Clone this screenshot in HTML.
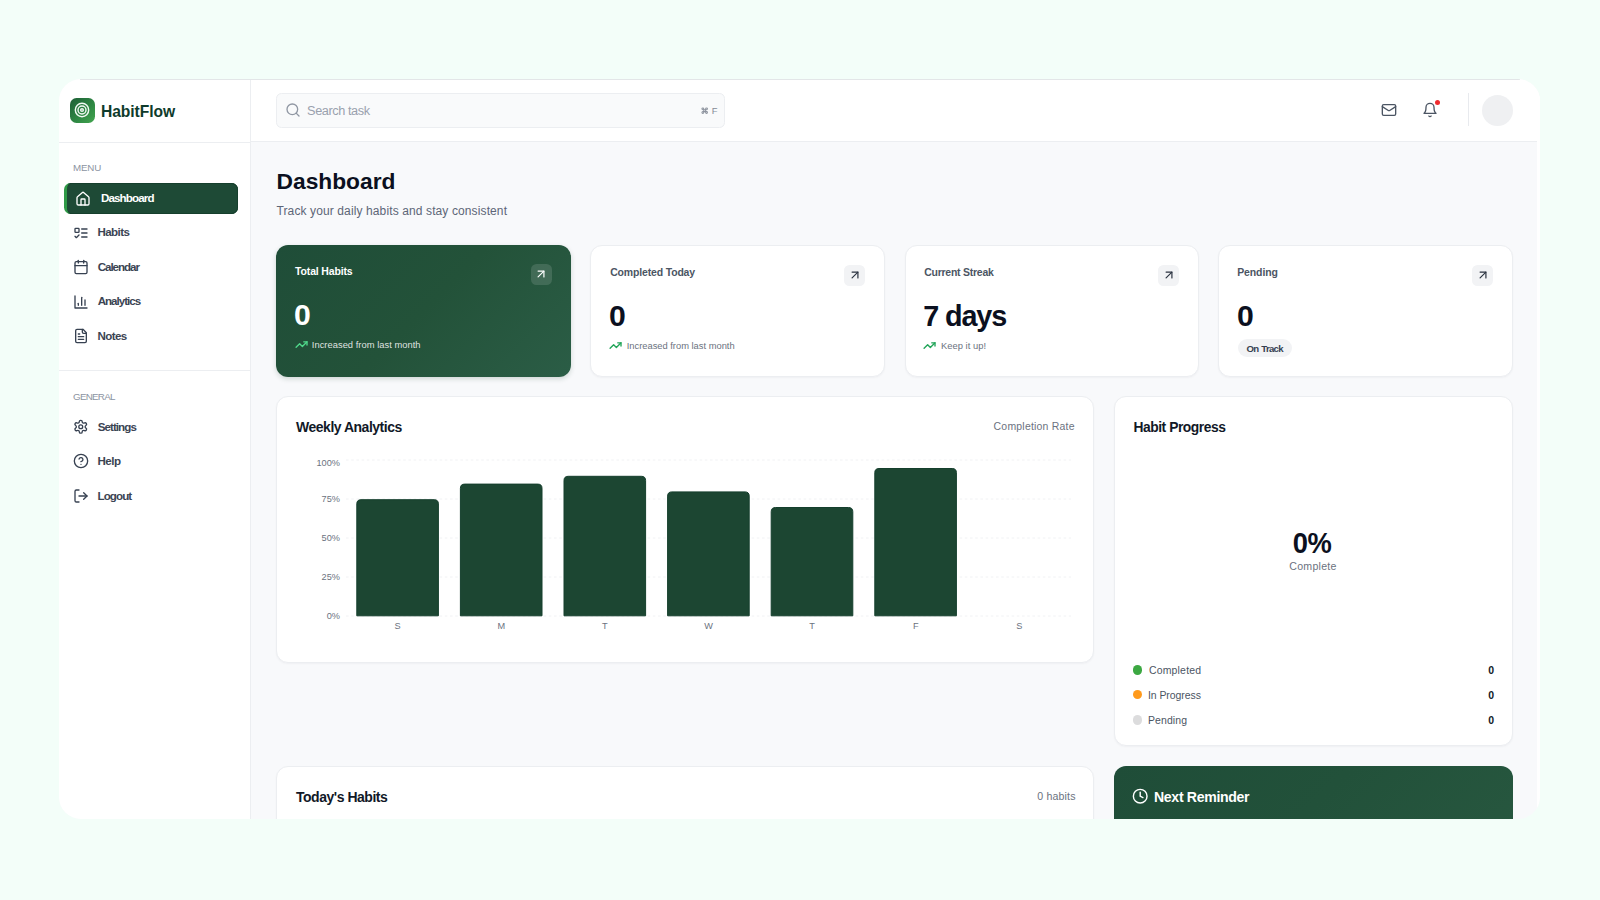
<!DOCTYPE html>
<html lang="en">
<head>
<meta charset="utf-8">
<title>HabitFlow Dashboard</title>
<style>
*{box-sizing:border-box;margin:0;padding:0}
html,body{width:1600px;height:900px;overflow:hidden}
body{background:#f3fef9;font-family:"Liberation Sans",sans-serif;position:relative;color:#111827}
.abs{position:absolute}
.t{position:absolute;white-space:nowrap;line-height:1;}
svg{display:block;overflow:visible}
.ic{position:absolute;fill:none;stroke:#374151;stroke-width:2;stroke-linecap:round;stroke-linejoin:round}
#win{position:absolute;left:59.3px;top:79px;width:1480.7px;height:740px;border-radius:22px;background:#f8f9fb;overflow:hidden}
#win:after{content:"";position:absolute;right:0;top:0;width:2.5px;height:740px;background:#fff}
#win:before{content:"";position:absolute;left:20.7px;right:20px;top:0;height:1px;background:#e3e6e8;z-index:5}
#side{position:absolute;left:0;top:0;width:191.7px;height:740px;background:#fff;border-right:1px solid #eceef1}
#head{position:absolute;left:191.7px;top:0;width:1289px;height:62.5px;background:#fff;border-bottom:1px solid #eceef1}
.hl{position:absolute;left:0;width:190.7px;height:1px;background:#eceef1}
.nav{font-size:11.6px;font-weight:700;color:#3b4453}
.lab{font-size:9.8px;color:#8c94a2;letter-spacing:.5px}
.ct{font-size:11.7px;font-weight:700;color:#4b5563}
.big{font-size:29px;font-weight:700;color:#0b1020}
.sm{font-size:10.4px;color:#6b7280}
.ab{width:21px;height:21px;border-radius:5.5px;background:#f2f3f5}
.ar{stroke:#2b3340;stroke-width:2.05}
.tr{stroke:#22a559;stroke-width:2.5}
.st{font-size:15px;font-weight:700;color:#111827}
.yl{font-size:9.2px;color:#6b7280}
.xl{font-size:9.2px;color:#6b7280}
.lg{font-size:11.6px;color:#4b5563}
.lv{font-size:10.5px;font-weight:700;color:#111827}
.card{position:absolute;background:#fff;border:1px solid #eceef1;border-radius:12px;box-shadow:0 1px 2px rgba(16,24,40,.04)}
</style>
</head>
<body>
<div id="win">
  <!-- SIDEBAR -->
  <div id="side">
    <div class="hl" style="top:62.5px"></div>
    <div class="hl" style="top:290.6px"></div>
  </div>
  <!-- HEADER -->
  <div id="head"></div>
</div>

<!-- logo -->
<div class="abs" style="left:69.5px;top:97.5px;width:25px;height:25px;border-radius:6.5px;background:linear-gradient(135deg,#1d5e36 0%,#2f8a44 60%,#44a650 100%)"></div>
<svg class="ic" style="left:74px;top:102px;stroke:#f1f9f3;stroke-width:2.15" width="16" height="16" viewBox="0 0 24 24"><circle cx="12" cy="12" r="10"/><circle cx="12" cy="12" r="6"/><circle cx="12" cy="12" r="2"/></svg>
<div class="t" id="t_logo" style="left:101.00px;top:103.76px;font-size:15.64px;font-weight:700;color:#0e3b2c;letter-spacing:-0.075px">HabitFlow</div>

<!-- MENU -->
<div class="t lab" id="t_menu" style="left:73.10px;top:163.22px;font-size:9.78px;letter-spacing:-0.202px">MENU</div>
<div class="abs" style="left:64px;top:183px;width:174px;height:31px;border-radius:6.5px;background:#1e4a36;border-left:3px solid #2f9a47;box-shadow:inset -1px 0 0 #163f2d,inset 0 1px 0 #163f2d,inset 0 -1px 0 #163f2d"></div>
<svg class="ic" style="left:75.3px;top:190.9px;stroke:#fff" width="16" height="16" viewBox="0 0 24 24"><path d="M15 21v-8a1 1 0 0 0-1-1h-4a1 1 0 0 0-1 1v8"/><path d="M3 10a2 2 0 0 1 .709-1.528l7-5.999a2 2 0 0 1 2.582 0l7 5.999A2 2 0 0 1 21 10v9a2 2 0 0 1-2 2H5a2 2 0 0 1-2-2z"/></svg>
<div class="t nav" id="t_n0" style="left:101.00px;top:193.19px;color:#fff;font-size:11.59px;letter-spacing:-0.875px">Dashboard</div>

<svg class="ic" style="left:72.7px;top:225px" width="16" height="16" viewBox="0 0 24 24"><rect x="3" y="5" width="6" height="6" rx="1"/><path d="m3 17 2 2 4-4"/><path d="M13 6h8"/><path d="M13 12h8"/><path d="M13 18h8"/></svg>
<div class="t nav" id="t_n1" style="left:97.50px;top:227.49px;font-size:11.59px;letter-spacing:-0.600px">Habits</div>

<svg class="ic" style="left:72.7px;top:259.3px" width="16" height="16" viewBox="0 0 24 24"><path d="M8 2v4"/><path d="M16 2v4"/><rect width="18" height="18" x="3" y="4" rx="2"/><path d="M3 10h18"/></svg>
<div class="t nav" id="t_n2" style="left:97.70px;top:261.89px;font-size:11.59px;letter-spacing:-1.035px">Calendar</div>

<svg class="ic" style="left:72.7px;top:293.7px" width="16" height="16" viewBox="0 0 24 24"><path d="M3 3v18h18"/><path d="M18 17V9"/><path d="M13 17V5"/><path d="M8 17v-3"/></svg>
<div class="t nav" id="t_n3" style="left:97.70px;top:296.29px;font-size:11.59px;letter-spacing:-1.000px">Analytics</div>

<svg class="ic" style="left:72.7px;top:328px" width="16" height="16" viewBox="0 0 24 24"><path d="M15 2H6a2 2 0 0 0-2 2v16a2 2 0 0 0 2 2h12a2 2 0 0 0 2-2V7Z"/><path d="M14 2v4a2 2 0 0 0 2 2h4"/><path d="M10 9H8"/><path d="M16 13H8"/><path d="M16 17H8"/></svg>
<div class="t nav" id="t_n4" style="left:97.50px;top:330.69px;font-size:11.59px;letter-spacing:-0.625px">Notes</div>

<!-- GENERAL -->
<div class="t lab" id="t_gen" style="left:73.10px;top:392.22px;font-size:9.78px;letter-spacing:-0.737px">GENERAL</div>

<svg class="ic" style="left:73.1px;top:419.3px;stroke-width:2.05" width="15.5" height="15.5" viewBox="0 0 24 24"><path d="M12.22 2h-.44a2 2 0 0 0-2 2v.18a2 2 0 0 1-1 1.73l-.43.25a2 2 0 0 1-2 0l-.15-.08a2 2 0 0 0-2.73.73l-.22.38a2 2 0 0 0 .73 2.73l.15.1a2 2 0 0 1 1 1.72v.51a2 2 0 0 1-1 1.74l-.15.09a2 2 0 0 0-.73 2.73l.22.38a2 2 0 0 0 2.73.73l.15-.08a2 2 0 0 1 2 0l.43.25a2 2 0 0 1 1 1.73V20a2 2 0 0 0 2 2h.44a2 2 0 0 0 2-2v-.18a2 2 0 0 1 1-1.73l.43-.25a2 2 0 0 1 2 0l.15.08a2 2 0 0 0 2.73-.73l.22-.39a2 2 0 0 0-.73-2.73l-.15-.08a2 2 0 0 1-1-1.74v-.5a2 2 0 0 1 1-1.74l.15-.09a2 2 0 0 0 .73-2.73l-.22-.38a2 2 0 0 0-2.73-.73l-.15.08a2 2 0 0 1-2 0l-.43-.25a2 2 0 0 1-1-1.73V4a2 2 0 0 0-2-2z"/><circle cx="12" cy="12" r="3"/></svg>
<div class="t nav" id="t_n5" style="left:97.70px;top:422.09px;font-size:11.59px;letter-spacing:-0.933px">Settings</div>

<svg class="ic" style="left:72.5px;top:453.2px" width="16" height="16" viewBox="0 0 24 24"><circle cx="12" cy="12" r="10"/><path d="M9.09 9a3 3 0 0 1 5.83 1c0 2-3 3-3 3"/><path d="M12 17h.01"/></svg>
<div class="t nav" id="t_n6" style="left:97.50px;top:456.49px;font-size:11.59px;letter-spacing:-0.505px">Help</div>

<svg class="ic" style="left:72.7px;top:487.8px" width="16" height="16" viewBox="0 0 24 24"><path d="M9 21H5a2 2 0 0 1-2-2V5a2 2 0 0 1 2-2h4"/><polyline points="16 17 21 12 16 7"/><line x1="21" x2="9" y1="12" y2="12"/></svg>
<div class="t nav" id="t_n7" style="left:97.50px;top:490.89px;font-size:11.59px;letter-spacing:-0.900px">Logout</div>

<!-- HEADER CONTENT -->
<div class="abs" style="left:275.6px;top:92.6px;width:449.6px;height:35.2px;border:1px solid #eceef1;border-radius:5.5px;background:#f9fafb"></div>
<svg class="ic" style="left:284.9px;top:102.4px;stroke:#9097a3;stroke-width:2" width="16" height="16" viewBox="0 0 24 24"><circle cx="11" cy="11" r="8"/><path d="m21 21-4.3-4.3"/></svg>
<div class="t" id="t_search" style="left:307.10px;top:104.84px;font-size:12.71px;color:#9aa1ae;letter-spacing:-0.410px">Search task</div>
<svg class="ic" style="left:701px;top:106.6px;stroke:#8d939e;stroke-width:3.3" width="7.4" height="7.4" viewBox="0 0 24 24"><path d="M15 6v12a3 3 0 1 0 3-3H6a3 3 0 1 0 3 3V6a3 3 0 1 0-3 3h12a3 3 0 1 0-3-3"/></svg>
<div class="t" id="t_kf" style="left:711.8px;top:106px;font-size:9.4px;color:#858b97">F</div>

<svg class="ic" style="left:1381px;top:102.1px;stroke:#4b5563" width="16" height="16" viewBox="0 0 24 24"><rect width="20" height="16" x="2" y="4" rx="2"/><path d="m22 7-8.97 5.7a1.94 1.94 0 0 1-2.06 0L2 7"/></svg>
<svg class="ic" style="left:1421.7px;top:102.3px;stroke:#4b5563" width="16" height="16" viewBox="0 0 24 24"><path d="M6 8a6 6 0 0 1 12 0c0 7 3 9 3 9H3s3-2 3-9"/><path d="M10.3 21a1.94 1.94 0 0 0 3.4 0"/></svg>
<div class="abs" style="left:1434.6px;top:99.6px;width:5.6px;height:5.6px;border-radius:50%;background:#ef2b2d"></div>
<div class="abs" style="left:1468px;top:93px;width:1px;height:33px;background:#e8eaee"></div>
<div class="abs" style="left:1482px;top:94.5px;width:31px;height:31px;border-radius:50%;background:#eff0f2"></div>

<!-- MAIN -->
<div class="t" id="t_h1" style="left:276.60px;top:169.63px;font-size:22.77px;font-weight:700;color:#0b1020;letter-spacing:-0.011px">Dashboard</div>
<div class="t" id="t_sub" style="left:276.5px;top:205.23px;font-size:12.01px;color:#5d6677;letter-spacing:0.115px">Track your daily habits and stay consistent</div>

<!-- STAT CARD 1 -->
<div class="abs" style="left:276px;top:244.5px;width:295px;height:132.5px;border-radius:12px;background:linear-gradient(135deg,#1f4d38 0%,#235239 50%,#2b5d46 100%);box-shadow:0 2px 5px rgba(20,60,40,.18)"></div>
<div class="t ct" id="t_c1" style="left:295.10px;top:267.13px;color:#fff;font-weight:700;font-size:10.47px;letter-spacing:-0.153px">Total Habits</div>
<div class="abs ab" style="left:530.6px;top:263.6px;background:rgba(255,255,255,.13)"></div>
<svg class="ic ar" style="left:534.1px;top:267.1px;stroke:#fff" width="14" height="14" viewBox="0 0 24 24"><path d="M7 7h10v10"/><path d="M7 17 17 7"/></svg>
<div class="t big" id="t_v1" style="left:293.80px;top:300.85px;color:#fff;font-size:28.77px;letter-spacing:0.000px;transform:scaleX(1.05);transform-origin:0 50%">0</div>
<svg class="ic tr" style="left:294.5px;top:338.2px;stroke:#4fd88a" width="13.1" height="13.1" viewBox="0 0 24 24"><polyline points="22 7 13.5 15.5 8.5 10.5 2 17"/><polyline points="16 7 22 7 22 13"/></svg>
<div class="t sm" id="t_s1" style="left:311.80px;top:340.58px;color:rgba(255,255,255,.86);font-size:9.36px;letter-spacing:0.030px">Increased from last month</div>

<!-- STAT CARD 2 -->
<div class="card" style="left:590.4px;top:244.5px;width:294.6px;height:132.5px"></div>
<div class="t ct" id="t_c2" style="left:610.20px;top:268.13px;font-size:10.47px;letter-spacing:-0.152px">Completed Today</div>
<div class="abs ab" style="left:844.4px;top:264.6px"></div>
<svg class="ic ar" style="left:847.9px;top:268.1px" width="14" height="14" viewBox="0 0 24 24"><path d="M7 7h10v10"/><path d="M7 17 17 7"/></svg>
<div class="t big" id="t_v2" style="left:609.30px;top:301.85px;font-size:28.77px;letter-spacing:0.000px;transform:scaleX(1.05);transform-origin:0 50%">0</div>
<svg class="ic tr" style="left:609.1px;top:339.2px" width="13.1" height="13.1" viewBox="0 0 24 24"><polyline points="22 7 13.5 15.5 8.5 10.5 2 17"/><polyline points="16 7 22 7 22 13"/></svg>
<div class="t sm" id="t_s2" style="left:626.70px;top:341.58px;font-size:9.36px;letter-spacing:-0.004px">Increased from last month</div>

<!-- STAT CARD 3 -->
<div class="card" style="left:904.6px;top:244.5px;width:294.8px;height:132.5px"></div>
<div class="t ct" id="t_c3" style="left:924.20px;top:268.13px;font-size:10.47px;letter-spacing:-0.239px">Current Streak</div>
<div class="abs ab" style="left:1158.2px;top:264.6px"></div>
<svg class="ic ar" style="left:1161.7px;top:268.1px" width="14" height="14" viewBox="0 0 24 24"><path d="M7 7h10v10"/><path d="M7 17 17 7"/></svg>
<div class="t big" id="t_v3" style="left:923.20px;top:301.85px;font-size:28.77px;letter-spacing:-1.120px">7 days</div>
<svg class="ic tr" style="left:923.1px;top:339.2px" width="13.1" height="13.1" viewBox="0 0 24 24"><polyline points="22 7 13.5 15.5 8.5 10.5 2 17"/><polyline points="16 7 22 7 22 13"/></svg>
<div class="t sm" id="t_s3" style="left:941.00px;top:341.58px;font-size:9.36px;letter-spacing:0.040px">Keep it up!</div>

<!-- STAT CARD 4 -->
<div class="card" style="left:1218.4px;top:244.5px;width:294.2px;height:132.5px"></div>
<div class="t ct" id="t_c4" style="left:1237.20px;top:268.13px;font-size:10.47px;letter-spacing:-0.096px">Pending</div>
<div class="abs ab" style="left:1472px;top:264.6px"></div>
<svg class="ic ar" style="left:1475.5px;top:268.1px" width="14" height="14" viewBox="0 0 24 24"><path d="M7 7h10v10"/><path d="M7 17 17 7"/></svg>
<div class="t big" id="t_v4" style="left:1237.30px;top:301.85px;font-size:28.77px;letter-spacing:0.000px;transform:scaleX(1.05);transform-origin:0 50%">0</div>
<div class="abs" style="left:1238px;top:339.4px;width:54.4px;height:18px;border-radius:9px;background:#f2f3f5"></div>
<div class="t" id="t_ot" style="left:1246.5px;top:344.1px;font-size:9.6px;font-weight:700;color:#374151;letter-spacing:-0.72px;word-spacing:1px">On Track</div>

<!-- CHART -->
<div class="card" style="left:276px;top:396.3px;width:818px;height:266.6px"></div>
<div class="t st" id="t_wa" style="left:296.10px;top:421.08px;font-size:13.97px;letter-spacing:-0.485px">Weekly Analytics</div>
<div class="t" id="t_cr" style="left:993.60px;top:421.63px;font-size:10.47px;color:#6b7280;letter-spacing:0.208px">Completion Rate</div>
<svg class="abs" style="left:276px;top:396px" width="818" height="266" viewBox="276 396 818 266"><line x1="346" x2="1071" y1="460.0" y2="460.0" stroke="#f1f2f4" stroke-width="1" stroke-dasharray="2.6 2.6"/><line x1="346" x2="1071" y1="499.0" y2="499.0" stroke="#f1f2f4" stroke-width="1" stroke-dasharray="2.6 2.6"/><line x1="346" x2="1071" y1="538.0" y2="538.0" stroke="#f1f2f4" stroke-width="1" stroke-dasharray="2.6 2.6"/><line x1="346" x2="1071" y1="577.0" y2="577.0" stroke="#f1f2f4" stroke-width="1" stroke-dasharray="2.6 2.6"/><line x1="346" x2="1071" y1="616.0" y2="616.0" stroke="#f1f2f4" stroke-width="1" stroke-dasharray="2.6 2.6"/><path d="M356.8,615.8V503.9Q356.8,499.7 361.0,499.7H434.2Q438.4,499.7 438.4,503.9V615.8Z" fill="#1c4632" stroke="#153f2d" stroke-width="1"/><path d="M460.4,615.8V488.3Q460.4,484.1 464.6,484.1H537.8Q542.0,484.1 542.0,488.3V615.8Z" fill="#1c4632" stroke="#153f2d" stroke-width="1"/><path d="M564.0,615.8V480.5Q564.0,476.3 568.2,476.3H641.4Q645.6,476.3 645.6,480.5V615.8Z" fill="#1c4632" stroke="#153f2d" stroke-width="1"/><path d="M667.6,615.8V496.1Q667.6,491.9 671.8,491.9H745.0Q749.2,491.9 749.2,496.1V615.8Z" fill="#1c4632" stroke="#153f2d" stroke-width="1"/><path d="M771.2,615.8V511.7Q771.2,507.5 775.4,507.5H848.6Q852.8,507.5 852.8,511.7V615.8Z" fill="#1c4632" stroke="#153f2d" stroke-width="1"/><path d="M874.8,615.8V472.7Q874.8,468.5 879.0,468.5H952.2Q956.4,468.5 956.4,472.7V615.8Z" fill="#1c4632" stroke="#153f2d" stroke-width="1"/></svg>
<div class="t yl" id="t_y100" style="right:1260px;top:459.2px">100%</div>
<div class="t yl" id="t_y75" style="right:1260px;top:494.9px">75%</div>
<div class="t yl" id="t_y50" style="right:1260px;top:534.0px">50%</div>
<div class="t yl" id="t_y25" style="right:1260px;top:573.2px">25%</div>
<div class="t yl" id="t_y0" style="right:1260px;top:612.1px">0%</div>
<div class="t xl" id="t_x0" style="left:387.7px;top:622px;width:20px;text-align:center">S</div>
<div class="t xl" id="t_x1" style="left:491.3px;top:622px;width:20px;text-align:center">M</div>
<div class="t xl" id="t_x2" style="left:594.9px;top:622px;width:20px;text-align:center">T</div>
<div class="t xl" id="t_x3" style="left:698.5px;top:622px;width:20px;text-align:center">W</div>
<div class="t xl" id="t_x4" style="left:802.1px;top:622px;width:20px;text-align:center">T</div>
<div class="t xl" id="t_x5" style="left:905.7px;top:622px;width:20px;text-align:center">F</div>
<div class="t xl" id="t_x6" style="left:1009.3px;top:622px;width:20px;text-align:center">S</div>
<!-- PROGRESS -->
<div class="card" style="left:1114px;top:396.3px;width:398.5px;height:349.7px"></div>
<div class="t st" id="t_hp" style="left:1133.50px;top:421.40px;font-size:13.83px;letter-spacing:-0.464px">Habit Progress</div>
<div class="t" id="t_pct" style="left:1262.2px;top:529.35px;width:100px;text-align:center;font-size:28.77px;font-weight:700;color:#0b1020;letter-spacing:-0.600px;transform:scaleX(.95);transform-origin:50% 50%">0%</div>
<div class="t" id="t_cmp" style="left:1263px;top:560.81px;width:100px;text-align:center;font-size:10.61px;color:#6b7280;letter-spacing:0.244px">Complete</div>
<div class="abs" style="left:1132.8px;top:665px;width:9.6px;height:9.6px;border-radius:50%;background:#3ca842"></div>
<div class="t lg" id="t_l1" style="left:1148.90px;top:666.23px;font-size:10.47px;letter-spacing:0.195px">Completed</div>
<div class="t lv" id="t_lv1" style="right:105.9px;top:664.7px">0</div>
<div class="abs" style="left:1132.8px;top:689.9px;width:9.6px;height:9.6px;border-radius:50%;background:#ff9a1c"></div>
<div class="t lg" id="t_l2" style="left:1147.90px;top:691.43px;font-size:10.47px;letter-spacing:-0.040px">In Progress</div>
<div class="t lv" id="t_lv2" style="right:105.9px;top:689.9px">0</div>
<div class="abs" style="left:1132.8px;top:715.1px;width:9.6px;height:9.6px;border-radius:50%;background:#dcdcdd"></div>
<div class="t lg" id="t_l3" style="left:1147.90px;top:716.43px;font-size:10.47px;letter-spacing:0.130px">Pending</div>
<div class="t lv" id="t_lv3" style="right:105.9px;top:714.9px">0</div>
<!-- BOTTOM -->
<div class="card" style="left:276px;top:766.3px;width:818px;height:80px;border-bottom-left-radius:0;border-bottom-right-radius:0"></div>
<div class="t st" id="t_th" style="left:296.00px;top:791.18px;font-size:13.97px;letter-spacing:-0.461px">Today's Habits</div>
<div class="t" id="t_nh" style="left:1037.30px;top:791.41px;font-size:10.61px;color:#6b7280;letter-spacing:0.145px">0 habits</div>
<div class="abs" style="left:1113.7px;top:766.3px;width:399px;height:80px;border-radius:12px 12px 0 0;background:linear-gradient(135deg,#1f4d38 0%,#22513a 50%,#27573f 100%)"></div>
<svg class="ic" style="left:1131.8px;top:787.9px;stroke:#fff;stroke-width:2.1" width="16.4" height="16.4" viewBox="0 0 24 24"><circle cx="12" cy="12" r="10"/><polyline points="12 6 12 12 16 14"/></svg>
<div class="t st" id="t_nr" style="left:1154.00px;top:789.96px;color:#fff;font-size:14.11px;letter-spacing:-0.333px">Next Reminder</div>
<div class="abs" style="left:0;top:819px;width:1600px;height:81px;background:#f3fef9"></div>
</body>
</html>
